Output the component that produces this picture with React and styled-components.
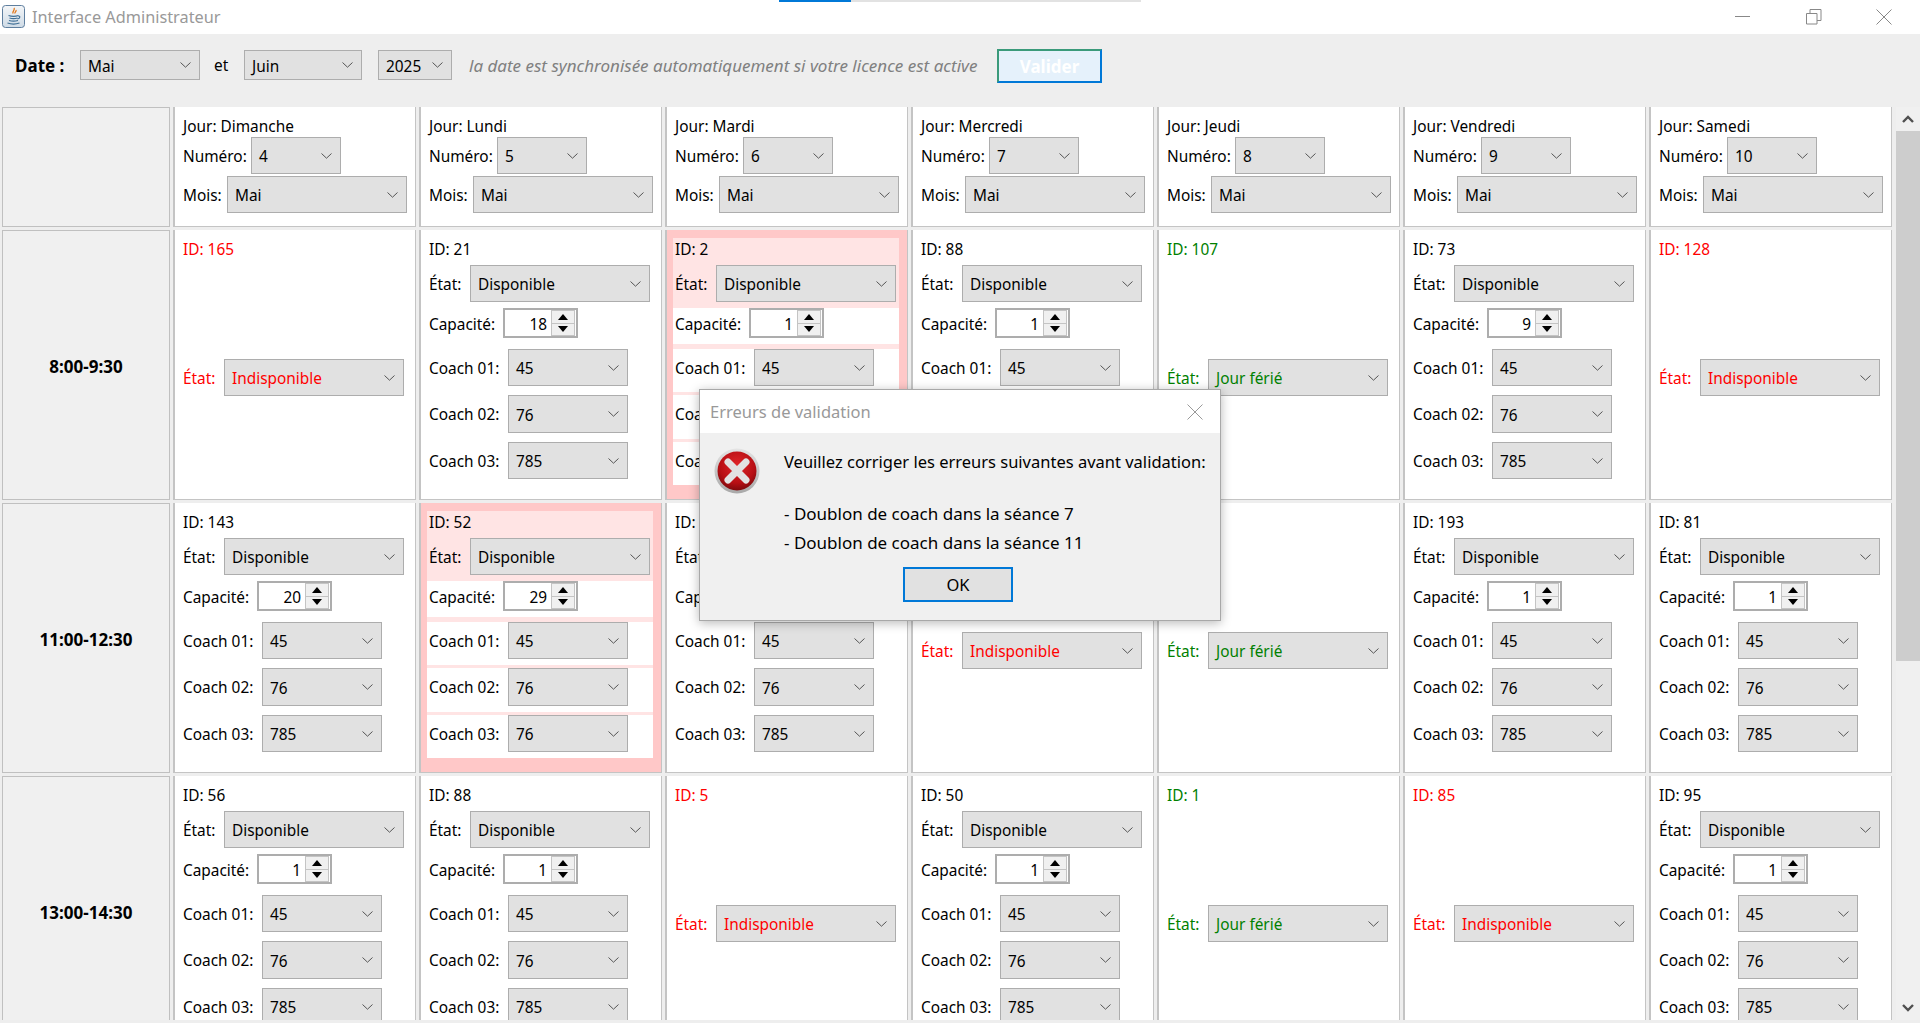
import React from 'react';
import styled, { createGlobalStyle } from 'styled-components';

const Global = createGlobalStyle`
  html, body { margin: 0; padding: 0; height: 100%; overflow: hidden; }
  body { background: #eee; font-family: "Noto Sans", "Open Sans", sans-serif; font-size: 15.4px; color: #000; }
  * { box-sizing: border-box; }
`;

const Window = styled.div`
  position: relative; width: 1920px; height: 1023px; display: flex; flex-direction: column; overflow: hidden; background: #eee;
`;
const TitleBar = styled.div`
  height: 34px; flex: none; background: #fff; display: flex; align-items: center; padding-left: 2px;
`;
const AppIcon = styled.div` display: flex; margin-bottom: 2px; `;
const TitleText = styled.div`
  margin-left: 7px; font-size: 16.3px; color: #999; line-height: 36px; flex: 1;
`;
const WinButtons = styled.div`
  display: flex; align-items: center; padding-right: 28px; gap: 54.5px;
`;
const LoadStrip = styled.div`
  position: absolute; left: 779px; top: 0; width: 362px; height: 2px; background: #e2e2e2;
  &::before { content: ""; display: block; width: 72px; height: 100%; background: #0078d7; }
`;
const Toolbar = styled.div`
  height: 73px; flex: none; display: flex; align-items: flex-start; padding: 16px 0 0 15px; background: #eee;
`;
const DateLabel = styled.b` font-weight: 700; line-height: 32px; width: 65px; font-size: 17px; flex: none; white-space: nowrap; `;
const ToolbarEt = styled.span` line-height: 32px; width: 44px; padding-left: 14px; flex: none; `;
const YearGap = styled.div` width: 16px; flex: none; `;
const Hint = styled.i` line-height: 32px; color: #808080; margin-left: 17px; width: 528px; flex: none; white-space: nowrap; font-size: 17px; `;
const Validate = styled.div`
  width: 105px; height: 34px; margin-top: -1px; background: #e5f1fb; border: 2px solid #0078d7; border-top-color: #3a9a7a; border-left-color: #3a9a7a;
  color: #fff; font-weight: 700; font-size: 17px; display: flex; align-items: center; justify-content: center;
`;
const Main = styled.div`
  height: 913px; flex: none; display: flex; overflow: hidden;
`;
const Grid = styled.div`
  margin-left: 2px; width: 1890px; display: grid; grid-template-columns: 168px repeat(7, 243px); grid-auto-rows: 270px;
  grid-template-rows: 120px; gap: 3px; align-content: start;
`;
const TimeCell = styled.div`
  background: #f0f0f0; border: 1px solid #c0c0c0; padding-top: 2px; display: flex; align-items: center; justify-content: center; font-weight: 700; font-size: 17px;
`;
const Cell = styled.div`
  background: ${p => (p.$flagged ? '#ffc8c8' : '#fff')}; border-left: 2px solid #c4c4c4; border-right: 1px solid #c4c4c4; border-bottom: 1px solid #c4c4c4;
  padding: 8px 8px 11px 6px; color: ${p => p.$tone || '#000'}; overflow: hidden;
`;
const Stack = styled.div`
  display: flex; flex-direction: column; background: ${p => (p.$flagged ? '#ffe4e4' : '#fff')};
`;
const IdRow = styled.div` height: 22px; padding-left: 2px; line-height: 24px; white-space: nowrap; `;
const Row = styled.div`
  height: ${p => p.$h}px; margin-top: ${p => p.$mt || 0}px; padding-left: 2px; display: flex; align-items: flex-start;
`;
const WhiteRow = styled(Row)` background: #fff; `;
const Label = styled.span`
  width: ${p => p.$w}px; flex: none; line-height: ${p => p.$lh || 39}px; white-space: nowrap;
`;
const SelectBox = styled.div`
  width: ${p => p.$w}px; height: ${p => p.$h || 37}px; flex: none; background: #e1e1e1; border: 1px solid #adadad;
  display: flex; align-items: center; justify-content: space-between; padding: 0 8px 0 7px; color: ${p => p.$tone || '#000'};
`;
const SelectText = styled.span` margin-top: 2px; `;
const Spinner = styled.div`
  width: 75px; height: 30px; flex: none; border: 2px solid #adadad; background: #fff; display: flex; align-items: center; justify-content: flex-end; padding-right: 1px;
`;
const SpinValue = styled.span` flex: 1; text-align: right; padding: 2px 4px 0 0; `;
const SpinArrows = styled.div` width: 24px; height: 26px; display: flex; flex-direction: column; border: 1px solid #c4c4c4; background: #f0f0f0; `;
const SpinArrow = styled.div`
  flex: 1; display: flex; align-items: center; justify-content: center; border-top: ${p => (p.$down ? '1px solid #c4c4c4' : '0')};
`;
const Scrollbar = styled.div`
  width: 24px; margin-left: 4px; flex: none; background: #f0f0f0; display: flex; flex-direction: column;
`;
const ScrollArrow = styled.div` height: 24px; flex: none; display: flex; align-items: center; justify-content: center; `;
const ScrollThumb = styled.div` height: 530px; flex: none; background: #cdcdcd; `;
const ScrollRest = styled.div` flex: 1; `;

const Dialog = styled.div`
  position: absolute; left: 699px; top: 389px; width: 522px; height: 232px; background: #f0f0f0; border: 1px solid #a8a8a8; box-shadow: 0 2px 10px rgba(0,0,0,.28);
  display: flex; flex-direction: column;
`;
const DialogTitle = styled.div`
  height: 43px; flex: none; background: #fff; display: flex; align-items: center; justify-content: space-between; padding: 0 17px 0 10px; color: #999; font-size: 16.5px;
`;
const DialogBody = styled.div` flex: 1; display: flex; padding: 15px 0 0 14px; `;
const Message = styled.div` margin: 2px 0 0 24px; font-size: 16.5px; line-height: 24px; display: flex; flex-direction: column; flex: 1; `;
const MessageLine = styled.div` margin-top: ${p => p.$mt || 0}px; white-space: nowrap; height: 24px; line-height: 24px; `;
const ErrorLine = styled(MessageLine)` font-size: 17px; `;
const OkButton = styled.div`
  width: 110px; height: 35px; margin: 12px 0 0 119px; border: 2px solid #0078d7; background: #e1e1e1; display: flex; align-items: center; justify-content: center;
`;

const Chevron = () => (
  <svg width="11" height="6" viewBox="0 0 11 6"><path d="M.5.5 5.5 5.2 10.5.5" fill="none" stroke="#555" strokeWidth="1" /></svg>
);
const Tri = ({ down }) => (
  <svg width="10" height="6" viewBox="0 0 10 6"><path d={down ? 'M0 0H10L5 6Z' : 'M0 6H10L5 0Z'} fill="#000" /></svg>
);
const BoldChevron = ({ up }) => (
  <svg width="12" height="8" viewBox="0 0 12 8"><path d={up ? 'M1 7 6 2l5 5' : 'M1 1l5 5 5-5'} fill="none" stroke="#505050" strokeWidth="2.4" /></svg>
);
const JavaIcon = () => (
  <svg width="23" height="23" viewBox="0 0 23 23">
    <defs><linearGradient id="jBg" x1="0" y1="0" x2="0" y2="1"><stop offset="0" stopColor="#f4f6f8" /><stop offset="1" stopColor="#cfdbe6" /></linearGradient></defs>
    <rect x=".5" y=".5" width="22" height="22" rx="3" fill="url(#jBg)" stroke="#5f7f9f" />
    <path d="M12 3c1.500 2-2 3-1 5.500M14 5c.8 1.300-1.500 2-1 3.500" fill="none" stroke="#e0761a" strokeWidth="1.300" />
    <path d="M6.500 10.500c3 1 7 1 10 0M7.500 13c2.500.8 5.500.8 8 0M7 15.500c3 .8 6 .8 9 0M5.500 18c3.500 1.300 8.500 1.300 12 0M16 11c2.500-.5 2.500 2.500-.5 3" fill="none" stroke="#3f6f96" strokeWidth="1.100" />
  </svg>
);
const ErrorIcon = () => (
  <svg width="46" height="46" viewBox="0 0 46 46">
    <defs>
      <radialGradient id="errFill" cx="50%" cy="35%" r="65%"><stop offset="0" stopColor="#e0262a" /><stop offset=".7" stopColor="#b70f14" /><stop offset="1" stopColor="#7f0a0d" /></radialGradient>
      <linearGradient id="errRim" x1="0" y1="0" x2="0" y2="1"><stop offset="0" stopColor="#e4e4e4" /><stop offset="1" stopColor="#a8a8a8" /></linearGradient>
    </defs>
    <circle cx="23" cy="23" r="22.500" fill="url(#errRim)" />
    <circle cx="23" cy="23" r="19.500" fill="url(#errFill)" />
    <path d="M14 14 32 32M32 14 14 32" stroke="#e2e2e2" strokeWidth="7" strokeLinecap="round" />
  </svg>
);

const Sel = ({ w, h, tone, children }) => (
  <SelectBox $w={w} $h={h} $tone={tone}><SelectText>{children}</SelectText><Chevron /></SelectBox>
);

const HeadCell = ({ day, num }) => (
  <Cell>
    <IdRow>Jour: {day}</IdRow>
    <Row $h={39}><Label $w={68}>Numéro:</Label><Sel w={90}>{num}</Sel></Row>
    <Row $h={37}><Label $w={44}>Mois:</Label><Sel w={180}>Mai</Sel></Row>
  </Cell>
);

const Slot = ({ id, state, cap, c3 = 785, flagged }) => {
  if (state === 'off' || state === 'holiday') {
    const tone = state === 'off' ? '#ff0000' : '#008000';
    return (
      <Cell $tone={tone}>
        <IdRow>{id ? `ID: ${id}` : ''}</IdRow>
        <Row $h={37} $mt={99}><Label $w={41}>État:</Label><Sel w={180} tone={tone}>{state === 'off' ? 'Indisponible' : 'Jour férié'}</Sel></Row>
      </Cell>
    );
  }
  return (
    <Cell $flagged={flagged}>
      <Stack $flagged={flagged}>
        <IdRow>ID: {id}</IdRow>
        <Row $h={43} $mt={5}><Label $w={41}>État:</Label><Sel w={180}>Disponible</Sel></Row>
        <WhiteRow $h={36}><Label $w={74} $lh={34}>Capacité:</Label>
          <Spinner><SpinValue>{cap}</SpinValue><SpinArrows><SpinArrow><Tri /></SpinArrow><SpinArrow $down><Tri down /></SpinArrow></SpinArrows></Spinner>
        </WhiteRow>
        <WhiteRow $h={43} $mt={5}><Label $w={79}>Coach 01:</Label><Sel w={120}>45</Sel></WhiteRow>
        <WhiteRow $h={44} $mt={3}><Label $w={79}>Coach 02:</Label><Sel w={120} h={38}>76</Sel></WhiteRow>
        <WhiteRow $h={43} $mt={3}><Label $w={79}>Coach 03:</Label><Sel w={120}>{c3}</Sel></WhiteRow>
      </Stack>
    </Cell>
  );
};

const days = [['Dimanche', 4], ['Lundi', 5], ['Mardi', 6], ['Mercredi', 7], ['Jeudi', 8], ['Vendredi', 9], ['Samedi', 10]];
const rows = [
  ['8:00-9:30', [
    { id: 165, state: 'off' }, { id: 21, cap: 18 }, { id: 2, cap: 1, flagged: true }, { id: 88, cap: 1 }, { id: 107, state: 'holiday' }, { id: 73, cap: 9 }, { id: 128, state: 'off' },
  ]],
  ['11:00-12:30', [
    { id: 143, cap: 20 }, { id: 52, cap: 29, c3: 76, flagged: true }, { id: 12, cap: 1 }, { state: 'off' }, { state: 'holiday' }, { id: 193, cap: 1 }, { id: 81, cap: 1 },
  ]],
  ['13:00-14:30', [
    { id: 56, cap: 1 }, { id: 88, cap: 1 }, { id: 5, state: 'off' }, { id: 50, cap: 1 }, { id: 1, state: 'holiday' }, { id: 85, state: 'off' }, { id: 95, cap: 1 },
  ]],
];

export default function App() {
  return (
    <Window>
      <Global />
      <LoadStrip />
      <TitleBar>
        <AppIcon><JavaIcon /></AppIcon>
        <TitleText>Interface Administrateur</TitleText>
        <WinButtons>
          <svg width="16" height="16" viewBox="0 0 16 16"><path d="M0 7.500H15" stroke="#888" /></svg>
          <svg width="16" height="16" viewBox="0 0 16 16"><path d="M.5 4.500h10.500v10.500H.5zM4 4.500V.5h11v11h-4" fill="none" stroke="#888" /></svg>
          <svg width="16" height="16" viewBox="0 0 16 16"><path d="M.5.500 15.500 15.500M15.500.500.5 15.500" stroke="#888" /></svg>
        </WinButtons>
      </TitleBar>
      <Toolbar>
        <DateLabel>Date :</DateLabel>
        <Sel w={120} h={30}>Mai</Sel>
        <ToolbarEt>et</ToolbarEt>
        <Sel w={118} h={30}>Juin</Sel>
        <YearGap />
        <Sel w={74} h={30}>2025</Sel>
        <Hint>la date est synchronisée automatiquement si votre licence est active</Hint>
        <Validate>Valider</Validate>
      </Toolbar>
      <Main>
        <Grid>
          <TimeCell />
          {days.map(([d, n]) => <HeadCell key={d} day={d} num={n} />)}
          {rows.map(([time, slots]) => (
            <React.Fragment key={time}>
              <TimeCell>{time}</TimeCell>
              {slots.map((s, i) => <Slot key={i} {...s} />)}
            </React.Fragment>
          ))}
        </Grid>
        <Scrollbar>
          <ScrollArrow><BoldChevron up /></ScrollArrow>
          <ScrollThumb />
          <ScrollRest />
          <ScrollArrow><BoldChevron /></ScrollArrow>
        </Scrollbar>
      </Main>
      <Dialog>
        <DialogTitle>
          <span>Erreurs de validation</span>
          <svg width="16" height="16" viewBox="0 0 16 16"><path d="M.5.500 15.500 15.500M15.500.500.5 15.500" stroke="#999" /></svg>
        </DialogTitle>
        <DialogBody>
          <ErrorIcon />
          <Message>
            <MessageLine>Veuillez corriger les erreurs suivantes avant validation:</MessageLine>
            <ErrorLine $mt={28}>- Doublon de coach dans la séance 7</ErrorLine>
            <ErrorLine $mt={5}>- Doublon de coach dans la séance 11</ErrorLine>
            <OkButton>OK</OkButton>
          </Message>
        </DialogBody>
      </Dialog>
    </Window>
  );
}
